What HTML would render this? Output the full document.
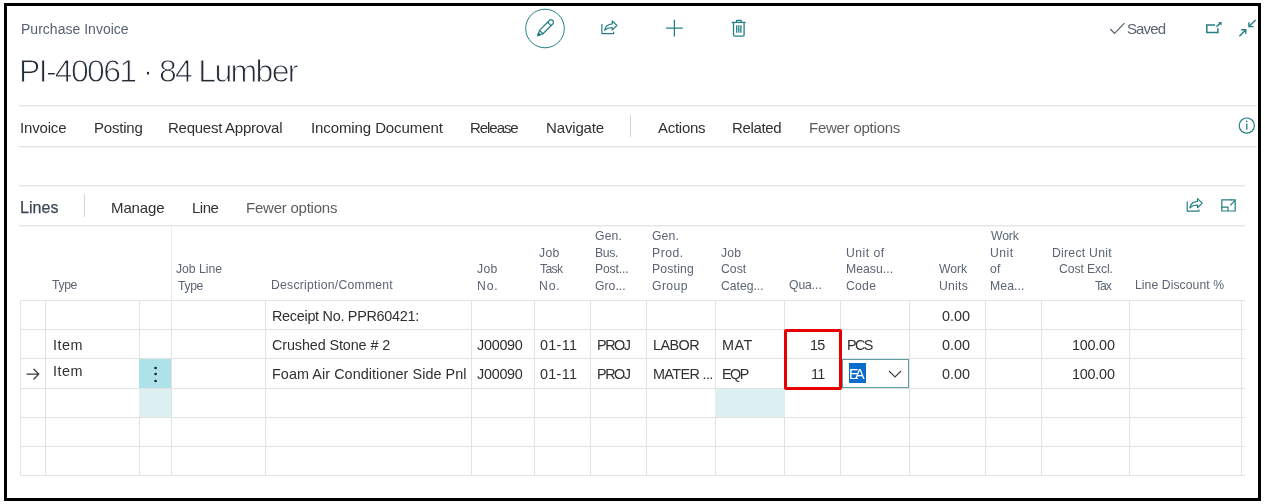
<!DOCTYPE html>
<html><head><meta charset="utf-8">
<style>
*{margin:0;padding:0;box-sizing:border-box}
html,body{width:1265px;height:504px;overflow:hidden;background:#fff;font-family:"Liberation Sans",sans-serif}
.t{position:absolute;white-space:nowrap;line-height:1;will-change:transform}
.a{position:absolute}
svg{position:absolute;overflow:visible}
</style></head><body>
<div class="a" style="left:4px;top:3px;width:1257px;height:498px;border:3px solid #000"></div>
<div class="a" style="left:19px;top:105px;width:1238px;height:1px;background:#e4e4e4;"></div>
<div class="a" style="left:19px;top:106px;width:1238px;height:1px;background:#f5f5f5;"></div>
<div class="a" style="left:19px;top:146px;width:1238px;height:1px;background:#e4e4e4;"></div>
<div class="a" style="left:19px;top:147px;width:1238px;height:1px;background:#f5f5f5;"></div>
<div class="a" style="left:19px;top:185px;width:1226px;height:1px;background:#e4e4e4;"></div>
<div class="a" style="left:19px;top:186px;width:1226px;height:1px;background:#f5f5f5;"></div>
<div class="a" style="left:19px;top:225px;width:1226px;height:1px;background:#e4e4e4;"></div>
<div class="a" style="left:19px;top:226px;width:1226px;height:1px;background:#f5f5f5;"></div>
<div class="a" style="left:630px;top:115px;width:1px;height:22px;background:#d6d6d6;"></div>
<div class="a" style="left:84px;top:194px;width:1px;height:23px;background:#d6d6d6;"></div>
<div class="a" style="left:171px;top:226px;width:1px;height:74px;background:#ececec;"></div>
<div class="a" style="left:20px;top:300px;width:1225px;height:1px;background:#e2e2e2;"></div>
<div class="a" style="left:20px;top:329px;width:1225px;height:1px;background:#e2e2e2;"></div>
<div class="a" style="left:20px;top:358px;width:1225px;height:1px;background:#e2e2e2;"></div>
<div class="a" style="left:20px;top:388px;width:1225px;height:1px;background:#e2e2e2;"></div>
<div class="a" style="left:20px;top:417px;width:1225px;height:1px;background:#e2e2e2;"></div>
<div class="a" style="left:20px;top:446px;width:1225px;height:1px;background:#e2e2e2;"></div>
<div class="a" style="left:20px;top:475px;width:1225px;height:1px;background:#e2e2e2;"></div>
<div class="a" style="left:20px;top:300px;width:1px;height:176px;background:#e2e2e2;"></div>
<div class="a" style="left:45px;top:300px;width:1px;height:176px;background:#e2e2e2;"></div>
<div class="a" style="left:139px;top:300px;width:1px;height:176px;background:#e2e2e2;"></div>
<div class="a" style="left:171px;top:300px;width:1px;height:176px;background:#e2e2e2;"></div>
<div class="a" style="left:265px;top:300px;width:1px;height:176px;background:#e2e2e2;"></div>
<div class="a" style="left:471px;top:300px;width:1px;height:176px;background:#e2e2e2;"></div>
<div class="a" style="left:534px;top:300px;width:1px;height:176px;background:#e2e2e2;"></div>
<div class="a" style="left:590px;top:300px;width:1px;height:176px;background:#e2e2e2;"></div>
<div class="a" style="left:646px;top:300px;width:1px;height:176px;background:#e2e2e2;"></div>
<div class="a" style="left:715px;top:300px;width:1px;height:176px;background:#e2e2e2;"></div>
<div class="a" style="left:784px;top:300px;width:1px;height:176px;background:#e2e2e2;"></div>
<div class="a" style="left:840px;top:300px;width:1px;height:176px;background:#e2e2e2;"></div>
<div class="a" style="left:909px;top:300px;width:1px;height:176px;background:#e2e2e2;"></div>
<div class="a" style="left:985px;top:300px;width:1px;height:176px;background:#e2e2e2;"></div>
<div class="a" style="left:1041px;top:300px;width:1px;height:176px;background:#e2e2e2;"></div>
<div class="a" style="left:1129px;top:300px;width:1px;height:176px;background:#e2e2e2;"></div>
<div class="a" style="left:1241px;top:300px;width:1px;height:176px;background:#e2e2e2;"></div>
<div class="a" style="left:139px;top:359px;width:32px;height:29px;background:#ade3e8;"></div>
<div class="a" style="left:139px;top:389px;width:32px;height:28px;background:#dcf0f2;"></div>
<div class="a" style="left:715px;top:389px;width:70px;height:28px;background:#dcf0f2;"></div>
<svg style="left:150px;top:365.1px" width="12" height="6"><circle cx="5.6" cy="3" r="1.35" fill="#1e2a2c"/></svg>
<svg style="left:150px;top:371.4px" width="12" height="6"><circle cx="5.6" cy="3" r="1.35" fill="#1e2a2c"/></svg>
<svg style="left:150px;top:377.8px" width="12" height="6"><circle cx="5.6" cy="3" r="1.35" fill="#1e2a2c"/></svg>
<svg style="left:0;top:0" width="1265" height="504" viewBox="0 0 1265 504"><g fill="none" stroke="#3a3a3a" stroke-width="1.3" stroke-linecap="round" stroke-linejoin="round"><path d="M27 374.1 H38.8 M33.9 369.2 L38.8 374.1 L33.9 379"/></g></svg>
<div class="a" style="left:784px;top:329px;width:58px;height:60.5px;border:3.3px solid #e60000;border-radius:2px"></div>
<div class="a" style="left:842px;top:359px;width:67px;height:29px;border:1px solid #5c9ea5;background:transparent"></div>
<div class="a" style="left:848.8px;top:363.1px;width:17.4px;height:19.7px;background:#0b6ccd;"></div>
<svg style="left:0;top:0" width="1265" height="504" viewBox="0 0 1265 504"><path d="M889 371 L895 377 L901 371" fill="none" stroke="#3a3a3a" stroke-width="1.1"/></svg>
<svg style="left:0;top:0" width="1265" height="504" viewBox="0 0 1265 504"><circle cx="545" cy="28.5" r="19.3" fill="none" stroke="#247f84" stroke-width="1"/><g transform="translate(545.2 28.1) rotate(-45) scale(0.93)" fill="none" stroke="#247f84" stroke-width="1.3" stroke-linejoin="round"><path d="M-6 -2.6 L8.9 -2.6 A2.6 2.6 0 0 1 8.9 2.6 L-6 2.6 Z"/><path d="M-6 -2.6 L-11.4 0 L-6 2.6"/><path d="M6.3 -2.6 V2.6"/><path d="M-11.4 0 L-8.6 -1.4 L-8.6 1.4 Z" fill="#247f84"/></g><g transform="translate(601.3 20.2) scale(1)" fill="none" stroke="#247f84" stroke-width="1.2" stroke-linejoin="round"><path d="M0.6 3.8 V13.4 H12.3 V11.6"/><path d="M3.3 10 Q4.4 4.3 10.9 3.6 V0.8 L15.6 5.3 L10.9 9.9 V7.4 Q6.3 7.2 3.3 10 Z"/></g><g transform="translate(1186.6 197.8) scale(1)" fill="none" stroke="#247f84" stroke-width="1.2" stroke-linejoin="round"><path d="M0.6 3.8 V13.4 H12.3 V11.6"/><path d="M3.3 10 Q4.4 4.3 10.9 3.6 V0.8 L15.6 5.3 L10.9 9.9 V7.4 Q6.3 7.2 3.3 10 Z"/></g><path d="M674.4 19.8 V36.5 M666.1 28.2 H682.8" stroke="#247f84" stroke-width="1.25" fill="none"/><g fill="none" stroke="#247f84" stroke-width="1.3" stroke-linejoin="round"><path d="M731.7 22.4 H745.6"/><path d="M736.6 22.2 V20.3 H741.2 V22.2"/><path d="M733.5 22.4 V35 Q733.5 36.1 734.8 36.1 H742.8 Q744.1 36.1 744.1 35 V22.4"/><path d="M736.7 25.2 V32.8 M738.8 25.2 V32.8 M740.9 25.2 V32.8"/></g><path d="M1110.3 29 L1114.5 33.3 L1124.5 23.2" fill="none" stroke="#56606e" stroke-width="1.2"/><g fill="none" stroke="#247f84" stroke-width="1.5"><path d="M1215 25 H1206.8 V32.5 H1217.9 V28.2"/><path d="M1216.4 26.8 L1220.6 22.9"/></g><path d="M1221.8 22 L1218.3 22.3 L1221.5 25.4 Z" fill="#247f84"/><g fill="none" stroke="#247f84" stroke-width="1.4"><path d="M1255.6 20.1 L1248.9 26.6 M1248.9 22.3 V26.6 H1253.6"/><path d="M1239.4 36.2 L1245.8 29.8 M1241.1 29.8 H1245.8 V33.7"/></g><circle cx="1246.8" cy="125.6" r="7.6" fill="none" stroke="#247f84" stroke-width="1.2"/><path d="M1246.8 123.5 V129.8" stroke="#247f84" stroke-width="1.3"/><circle cx="1246.8" cy="121.4" r="0.8" fill="#247f84"/><g fill="none" stroke="#247f84" stroke-width="1.2"><path d="M1232 199.9 H1221.8 V211 H1235.2 V203"/><path d="M1221.8 207.2 H1228 V211"/><path d="M1230.3 205.4 L1235.3 200.2 M1231.2 199.9 H1235.2 V203.5"/></g></svg>
<div class="t" id="t0" style="left:20.56px;top:22.25px;font-size:14.00px;letter-spacing:0.016px;color:#566273">Purchase Invoice</div>
<div class="t" id="t1" style="left:19.48px;top:54.91px;font-size:32.00px;letter-spacing:-1.676px;color:#222b36;-webkit-text-stroke:0.9px #fff">PI-40061 · 84 Lumber</div>
<div class="t" id="t2" style="left:1127.10px;top:21.40px;font-size:15.00px;letter-spacing:-0.880px;color:#5a6572">Saved</div>
<div class="t" id="t3" style="left:20.10px;top:119.60px;font-size:15.00px;letter-spacing:-0.173px;color:#323130">Invoice</div>
<div class="t" id="t4" style="left:93.50px;top:119.60px;font-size:15.00px;letter-spacing:-0.200px;color:#323130">Posting</div>
<div class="t" id="t5" style="left:168.30px;top:119.60px;font-size:15.00px;letter-spacing:-0.261px;color:#323130">Request Approval</div>
<div class="t" id="t6" style="left:310.70px;top:119.60px;font-size:15.00px;letter-spacing:-0.100px;color:#323130">Incoming Document</div>
<div class="t" id="t7" style="left:470.30px;top:119.60px;font-size:15.00px;letter-spacing:-1.053px;color:#323130">Release</div>
<div class="t" id="t8" style="left:545.90px;top:119.60px;font-size:15.00px;letter-spacing:-0.148px;color:#323130">Navigate</div>
<div class="t" id="t9" style="left:658.10px;top:119.60px;font-size:15.00px;letter-spacing:-0.267px;color:#323130">Actions</div>
<div class="t" id="t10" style="left:732.30px;top:119.60px;font-size:15.00px;letter-spacing:-0.360px;color:#323130">Related</div>
<div class="t" id="t11" style="left:808.90px;top:119.60px;font-size:15.00px;letter-spacing:-0.240px;color:#605e5c">Fewer options</div>
<div class="t" id="t12" style="left:20.24px;top:199.75px;font-size:16.00px;letter-spacing:0.040px;color:#3b4656;-webkit-text-stroke:0.25px #3b4656">Lines</div>
<div class="t" id="t13" style="left:111.10px;top:200.10px;font-size:15.00px;letter-spacing:-0.112px;color:#323130">Manage</div>
<div class="t" id="t14" style="left:192.10px;top:200.10px;font-size:15.00px;letter-spacing:-0.480px;color:#323130">Line</div>
<div class="t" id="t15" style="left:245.90px;top:200.10px;font-size:15.00px;letter-spacing:-0.233px;color:#605e5c">Fewer options</div>
<div class="t" id="t16" style="left:52.47px;top:278.87px;font-size:12.20px;letter-spacing:-0.347px;color:#5b6573">Type</div>
<div class="t" id="t17" style="left:176.07px;top:263.47px;font-size:12.20px;letter-spacing:-0.011px;color:#5b6573">Job Line</div>
<div class="t" id="t18" style="left:177.87px;top:280.27px;font-size:12.20px;letter-spacing:-0.347px;color:#5b6573">Type</div>
<div class="t" id="t19" style="left:270.87px;top:278.87px;font-size:12.20px;letter-spacing:0.254px;color:#5b6573">Description/Comment</div>
<div class="t" id="t20" style="left:477.07px;top:263.47px;font-size:12.20px;letter-spacing:0.360px;color:#5b6573">Job</div>
<div class="t" id="t21" style="left:477.07px;top:280.27px;font-size:12.20px;letter-spacing:0.840px;color:#5b6573">No.</div>
<div class="t" id="t22" style="left:539.47px;top:246.67px;font-size:12.20px;letter-spacing:0.360px;color:#5b6573">Job</div>
<div class="t" id="t23" style="left:540.47px;top:263.47px;font-size:12.20px;letter-spacing:-0.667px;color:#5b6573">Task</div>
<div class="t" id="t24" style="left:539.47px;top:280.27px;font-size:12.20px;letter-spacing:0.840px;color:#5b6573">No.</div>
<div class="t" id="t25" style="left:595.47px;top:229.87px;font-size:12.20px;letter-spacing:0.160px;color:#5b6573">Gen.</div>
<div class="t" id="t26" style="left:595.47px;top:246.67px;font-size:12.20px;letter-spacing:-0.293px;color:#5b6573">Bus.</div>
<div class="t" id="t27" style="left:595.47px;top:263.47px;font-size:12.20px;letter-spacing:-0.160px;color:#5b6573">Post...</div>
<div class="t" id="t28" style="left:595.47px;top:280.27px;font-size:12.20px;letter-spacing:0.032px;color:#5b6573">Gro...</div>
<div class="t" id="t29" style="left:651.87px;top:229.87px;font-size:12.20px;letter-spacing:0.133px;color:#5b6573">Gen.</div>
<div class="t" id="t30" style="left:651.87px;top:246.67px;font-size:12.20px;letter-spacing:0.500px;color:#5b6573">Prod.</div>
<div class="t" id="t31" style="left:651.87px;top:263.47px;font-size:12.20px;letter-spacing:0.186px;color:#5b6573">Posting</div>
<div class="t" id="t32" style="left:651.87px;top:280.27px;font-size:12.20px;letter-spacing:0.400px;color:#5b6573">Group</div>
<div class="t" id="t33" style="left:721.07px;top:246.67px;font-size:12.20px;letter-spacing:0.240px;color:#5b6573">Job</div>
<div class="t" id="t34" style="left:721.07px;top:263.47px;font-size:12.20px;letter-spacing:0.027px;color:#5b6573">Cost</div>
<div class="t" id="t35" style="left:721.07px;top:280.27px;font-size:12.20px;letter-spacing:-0.023px;color:#5b6573">Categ...</div>
<div class="t" id="t36" style="left:789.47px;top:278.87px;font-size:12.20px;letter-spacing:-0.080px;color:#5b6573">Qua...</div>
<div class="t" id="t37" style="left:845.67px;top:246.67px;font-size:12.20px;letter-spacing:0.494px;color:#5b6573">Unit of</div>
<div class="t" id="t38" style="left:845.67px;top:263.47px;font-size:12.20px;letter-spacing:0.045px;color:#5b6573">Measu...</div>
<div class="t" id="t39" style="left:845.67px;top:280.27px;font-size:12.20px;letter-spacing:0.267px;color:#5b6573">Code</div>
<div class="t" id="t40" style="left:939.47px;top:263.47px;font-size:12.20px;letter-spacing:0.000px;color:#5b6573">Work</div>
<div class="t" id="t41" style="left:938.87px;top:280.27px;font-size:12.20px;letter-spacing:0.240px;color:#5b6573">Units</div>
<div class="t" id="t42" style="left:991.27px;top:229.87px;font-size:12.20px;letter-spacing:-0.133px;color:#5b6573">Work</div>
<div class="t" id="t43" style="left:990.27px;top:246.67px;font-size:12.20px;letter-spacing:0.480px;color:#5b6573">Unit</div>
<div class="t" id="t44" style="left:990.27px;top:263.47px;font-size:12.20px;letter-spacing:0.320px;color:#5b6573">of</div>
<div class="t" id="t45" style="left:990.27px;top:280.27px;font-size:12.20px;letter-spacing:0.112px;color:#5b6573">Mea...</div>
<div class="t" id="t46" style="left:1052.27px;top:246.67px;font-size:12.20px;letter-spacing:0.264px;color:#5b6573">Direct Unit</div>
<div class="t" id="t47" style="left:1059.07px;top:263.47px;font-size:12.20px;letter-spacing:-0.097px;color:#5b6573">Cost Excl.</div>
<div class="t" id="t48" style="left:1095.27px;top:280.27px;font-size:12.20px;letter-spacing:-1.000px;color:#5b6573">Tax</div>
<div class="t" id="t49" style="left:1135.47px;top:278.87px;font-size:12.20px;letter-spacing:0.069px;color:#5b6573">Line Discount %</div>
<div class="t" id="t50" style="left:271.54px;top:309.21px;font-size:14.40px;letter-spacing:-0.280px;color:#303030">Receipt No. PPR60421:</div>
<div class="t" id="t51" style="left:942.34px;top:309.21px;font-size:14.40px;letter-spacing:-0.027px;color:#303030">0.00</div>
<div class="t" id="t52" style="left:52.54px;top:338.11px;font-size:14.40px;letter-spacing:0.533px;color:#303030">Item</div>
<div class="t" id="t53" style="left:271.54px;top:338.11px;font-size:14.40px;letter-spacing:-0.115px;color:#303030">Crushed Stone # 2</div>
<div class="t" id="t54" style="left:477.34px;top:338.11px;font-size:14.40px;letter-spacing:-0.272px;color:#303030">J00090</div>
<div class="t" id="t55" style="left:539.94px;top:338.11px;font-size:14.40px;letter-spacing:0.300px;color:#303030">01-11</div>
<div class="t" id="t56" style="left:596.74px;top:338.11px;font-size:14.40px;letter-spacing:-1.440px;color:#303030">PROJ</div>
<div class="t" id="t57" style="left:652.74px;top:338.11px;font-size:14.40px;letter-spacing:-0.560px;color:#303030">LABOR</div>
<div class="t" id="t58" style="left:721.54px;top:338.11px;font-size:14.40px;letter-spacing:0.440px;color:#303030">MAT</div>
<div class="t" id="t59" style="left:810.14px;top:338.11px;font-size:14.40px;letter-spacing:-0.640px;color:#303030">15</div>
<div class="t" id="t60" style="left:846.94px;top:338.11px;font-size:14.40px;letter-spacing:-1.640px;color:#303030">PCS</div>
<div class="t" id="t61" style="left:942.34px;top:338.11px;font-size:14.40px;letter-spacing:-0.027px;color:#303030">0.00</div>
<div class="t" id="t62" style="left:1071.74px;top:338.11px;font-size:14.40px;letter-spacing:-0.224px;color:#303030">100.00</div>
<div class="t" id="t63" style="left:52.54px;top:364.11px;font-size:14.40px;letter-spacing:0.533px;color:#303030">Item</div>
<div class="t" id="t64" style="left:271.54px;top:366.91px;font-size:14.40px;letter-spacing:0.063px;color:#303030">Foam Air Conditioner Side Pnl</div>
<div class="t" id="t65" style="left:477.34px;top:366.91px;font-size:14.40px;letter-spacing:-0.272px;color:#303030">J00090</div>
<div class="t" id="t66" style="left:539.94px;top:366.91px;font-size:14.40px;letter-spacing:0.300px;color:#303030">01-11</div>
<div class="t" id="t67" style="left:596.74px;top:366.91px;font-size:14.40px;letter-spacing:-1.440px;color:#303030">PROJ</div>
<div class="t" id="t68" style="left:652.74px;top:366.91px;font-size:14.40px;letter-spacing:-0.620px;color:#303030">MATER ...</div>
<div class="t" id="t69" style="left:721.54px;top:366.91px;font-size:14.40px;letter-spacing:-1.560px;color:#303030">EQP</div>
<div class="t" id="t70" style="left:810.74px;top:366.91px;font-size:14.40px;letter-spacing:-0.800px;color:#303030">11</div>
<div class="t" id="t71" style="left:849.34px;top:366.61px;font-size:14.40px;letter-spacing:-3.520px;color:#ffffff">EA</div>
<div class="t" id="t72" style="left:942.34px;top:366.91px;font-size:14.40px;letter-spacing:-0.027px;color:#303030">0.00</div>
<div class="t" id="t73" style="left:1071.74px;top:366.91px;font-size:14.40px;letter-spacing:-0.224px;color:#303030">100.00</div>
</body></html>
